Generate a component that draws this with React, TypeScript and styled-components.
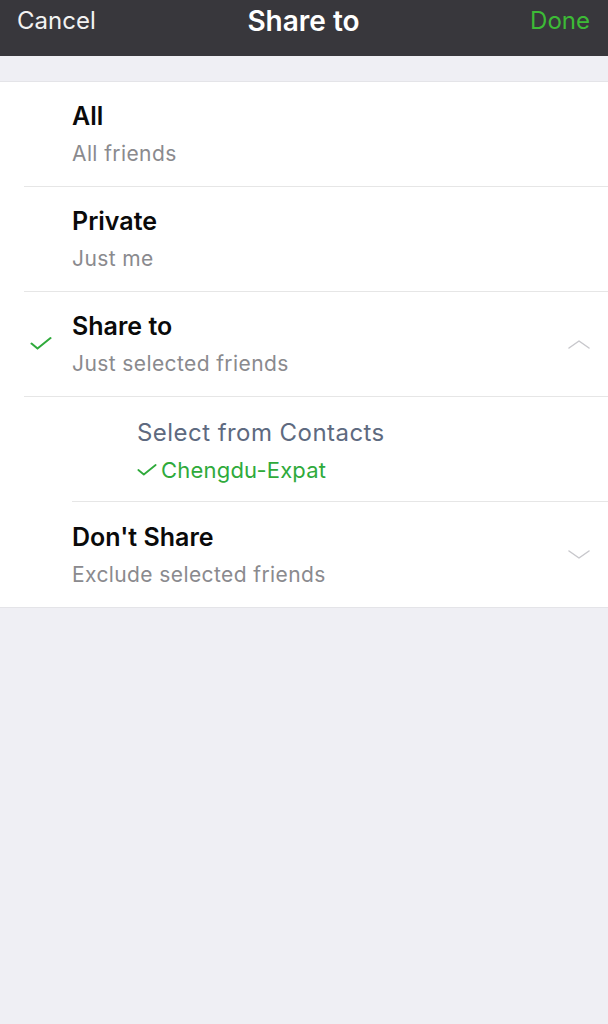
import React from "react";
import styled, { createGlobalStyle } from "styled-components";

const GlobalStyle = createGlobalStyle`
  html, body {
    margin: 0;
    padding: 0;
    background: #efeff4;
  }
  body {
    font-family: Inter, "Liberation Sans", Arial, sans-serif;
    -webkit-font-smoothing: antialiased;
  }
`;

const Page = styled.div`
  min-height: 1024px;
  background: #efeff4;
`;

const NavBar = styled.div`
  height: 56px;
  background: #38373c;
  display: grid;
  grid-template-columns: 1fr auto 1fr;
  align-items: start;
  padding: 6px 18px 0 17px;
  box-sizing: border-box;
`;

const NavButton = styled.span<{ $green?: boolean }>`
  font-size: 24px;
  line-height: 30px;
  color: ${({ $green }) => ($green ? "#3dbb36" : "#f2f2f2")};
  justify-self: ${({ $green }) => ($green ? "end" : "start")};
`;

const NavTitle = styled.span`
  font-size: 28px;
  font-weight: 600;
  line-height: 30px;
  color: #ffffff;
`;

const Section = styled.div`
  margin-top: 25px;
  background: #ffffff;
  border-top: 1px solid #e4e4e8;
  border-bottom: 1px solid #e4e4e8;
`;

const OptionRow = styled.div<{ $inset: number; $last?: boolean }>`
  margin-left: ${({ $inset }) => $inset}px;
  height: 105px;
  box-sizing: border-box;
  display: flex;
  align-items: center;
  border-bottom: ${({ $last }) => ($last ? "none" : "1px solid #e6e6e6")};
`;

const CheckSlot = styled.div`
  width: 48px;
  display: flex;
  justify-content: flex-start;
  padding-left: 6px;
  box-sizing: border-box;
`;

const TextBlock = styled.div<{ $pad?: number }>`
  flex: 1;
  display: flex;
  flex-direction: column;
  padding-left: ${({ $pad }) => $pad ?? 0}px;
`;

const Title = styled.div`
  font-size: 25px;
  font-weight: 600;
  line-height: 30px;
  color: #0a0a0a;
`;

const Subtitle = styled.div`
  font-size: 21px;
  letter-spacing: 0.4px;
  line-height: 26px;
  margin-top: 10px;
  color: #8a8a8e;
`;

const LinkText = styled.div`
  font-size: 24px;
  letter-spacing: 0.45px;
  line-height: 30px;
  margin-top: 2px;
  color: #5e6a80;
`;

const Tag = styled.div`
  display: flex;
  align-items: center;
  gap: 4px;
  margin-top: 9px;
  font-size: 22px;
  letter-spacing: 0.2px;
  line-height: 26px;
  color: #2faa3b;
`;

const ChevronSlot = styled.div`
  width: 40px;
  padding-right: 18px;
  display: flex;
  justify-content: flex-end;
`;

const Check = ({ size = 22 }: { size?: number }) => (
  <svg width={size} height={size * 0.6} viewBox="0 0 22 13" fill="none">
    <path d="M1.5 6.5 L7.5 11.5 L20.5 1" stroke="#2faa3b" strokeWidth="2" strokeLinecap="round" strokeLinejoin="round" />
  </svg>
);

const Chevron = ({ up }: { up?: boolean }) => (
  <svg width="22" height="9" viewBox="0 0 22 9" fill="none">
    <path
      d={up ? "M1 8 L11 1 L21 8" : "M1 1 L11 8 L21 1"}
      stroke="#c8c8cc"
      strokeWidth="1.5"
      strokeLinecap="round"
      strokeLinejoin="round"
    />
  </svg>
);

type Option = {
  title: string;
  subtitle: string;
  checked?: boolean;
  chevron?: "up" | "down";
};

const options: Option[] = [
  { title: "All", subtitle: "All friends" },
  { title: "Private", subtitle: "Just me" },
  { title: "Share to", subtitle: "Just selected friends", checked: true, chevron: "up" },
];

export default function App() {
  return (
    <Page>
      <GlobalStyle />
      <NavBar>
        <NavButton>Cancel</NavButton>
        <NavTitle>Share to</NavTitle>
        <NavButton $green>Done</NavButton>
      </NavBar>
      <Section>
        {options.map((o) => (
          <OptionRow key={o.title} $inset={24}>
            <CheckSlot>{o.checked && <Check />}</CheckSlot>
            <TextBlock>
              <Title>{o.title}</Title>
              <Subtitle>{o.subtitle}</Subtitle>
            </TextBlock>
            <ChevronSlot>{o.chevron && <Chevron up={o.chevron === "up"} />}</ChevronSlot>
          </OptionRow>
        ))}
        <OptionRow $inset={72}>
          <TextBlock $pad={65}>
            <LinkText>Select from Contacts</LinkText>
            <Tag>
              <Check size={20} />
              Chengdu-Expat
            </Tag>
          </TextBlock>
        </OptionRow>
        <OptionRow $inset={24} $last>
          <CheckSlot />
          <TextBlock>
            <Title>Don't Share</Title>
            <Subtitle>Exclude selected friends</Subtitle>
          </TextBlock>
          <ChevronSlot>
            <Chevron />
          </ChevronSlot>
        </OptionRow>
      </Section>
    </Page>
  );
}
